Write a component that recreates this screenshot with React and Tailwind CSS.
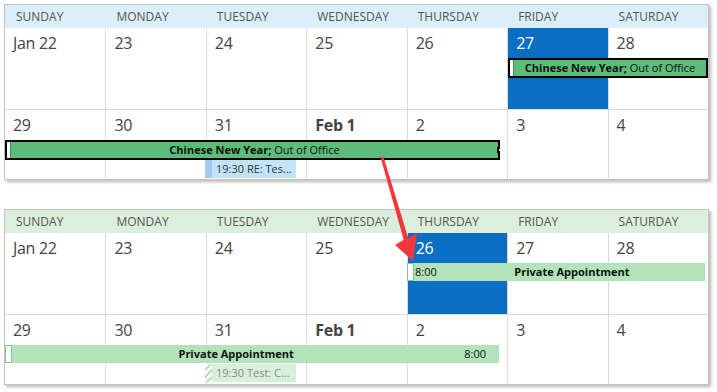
import React from "react";

const DAYS = ["SUNDAY", "MONDAY", "TUESDAY", "WEDNESDAY", "THURSDAY", "FRIDAY", "SATURDAY"];
const WEEK1 = ["Jan 22", "23", "24", "25", "26", "27", "28"];
const WEEK2 = ["29", "30", "31", "Feb 1", "2", "3", "4"];

const Cell = ({ label, idx, today, bold }) => (
  <div
    className={`h-full pl-[8px] pt-[5px] text-[16px] leading-[20px] tracking-[-0.3px] ${idx > 0 ? "border-l border-[#dadada]" : ""} ${
      today ? "bg-[#0a6fc2] text-white" : "text-[#444]"
    } ${bold ? "font-bold" : ""}`}
  >
    {label}
  </div>
);

const Week = ({ labels, today, className, children }) => (
  <div className={`relative grid grid-cols-7 ${className}`}>
    {labels.map((l, i) => (
      <Cell key={i} idx={i} label={l} today={today === i} bold={l === "Feb 1"} />
    ))}
    {children}
  </div>
);

const Calendar = ({ headBg, today, week1Events, week2Events, className }) => (
  <div className={`w-[705px] border border-[#c4c4c4] bg-white shadow-[2px_2px_3px_rgba(0,0,0,0.28)] ${className}`}>
    <div className={`grid grid-cols-7 h-[23px] items-center ${headBg}`}>
      {DAYS.map((d) => (
        <div key={d} className="pl-[11px] text-[12px] text-[#555] leading-none">
          {d}
        </div>
      ))}
    </div>
    <Week labels={WEEK1} today={today} className="h-[82px] border-b border-[#dadada]">
      {week1Events}
    </Week>
    <Week labels={WEEK2} className="h-[69px]">
      {week2Events}
    </Week>
  </div>
);

const OutOfOffice = ({ className, notchRight }) => (
  <div className={`absolute flex h-[20px] border-2 border-black bg-[#5bbd79] ${className}`}>
    <div className="w-[4px] h-full bg-white border-r border-[#3f8f58]"></div>
    <div className="flex-1 flex items-center justify-center text-[11px] text-[#111] whitespace-nowrap">
      <span className="font-bold">Chinese New Year;</span>&nbsp;Out of Office
    </div>
    {notchRight && <div className="absolute right-[-2px] top-[5px] w-[3px] h-[6px] bg-white border-y-2 border-l-2 border-black"></div>}
  </div>
);

const Private = ({ className, timeLeft }) => (
  <div className={`absolute flex items-center h-[18px] bg-[#b2e3b9] text-[11px] text-[#111] whitespace-nowrap ${className}`}>
    <div className="w-[7px] h-full bg-white border border-[#7fc98b]"></div>
    {timeLeft && <span className="pl-[1px] pr-[2px]">8:00</span>}
    <div className="flex-1 text-center font-bold">Private Appointment</div>
    {!timeLeft && <span className="pl-[4px] pr-[13px]">8:00</span>}
  </div>
);

export default function App() {
  return (
    <div className="relative w-[717px] h-[392px] bg-white pl-[4px] pt-[4px] font-['Open_Sans',sans-serif] overflow-hidden">
      <Calendar
        headBg="bg-[#dbeffa]"
        today={5}
        week1Events={<OutOfOffice className="left-[503px] top-[30px] w-[200px]" />}
        week2Events={
          <>
            <OutOfOffice className="left-0 top-[30px] w-[495px]" notchRight />
            <div className="absolute left-[200px] top-[50px] w-[91px] h-[18px] flex bg-[#c2e4f8] text-[11px] text-[#333] items-center">
              <div className="w-[7px] h-full bg-[#a3cbee]"></div>
              <span className="pl-[4px] whitespace-nowrap">19:30 RE: Tes...</span>
            </div>
          </>
        }
      />

      <Calendar
        className="mt-[29px]"
        headBg="bg-[#dcefdc]"
        today={4}
        week1Events={<Private className="left-[402px] top-[30px] w-[298px]" timeLeft />}
        week2Events={
          <>
            <Private className="left-0 top-[30px] w-[494px]" />
            <div className="absolute left-[200px] top-[49px] w-[91px] h-[18px] flex bg-[#d6f0da] text-[11px] text-[#8a8a8a] items-center">
              <div className="w-[7px] h-full bg-[repeating-linear-gradient(135deg,#ffffff_0px,#ffffff_3px,#b2e3b9_3px,#b2e3b9_5px)]"></div>
              <span className="pl-[4px] whitespace-nowrap">19:30 Test: C...</span>
            </div>
          </>
        }
      />

      <svg className="absolute left-0 top-0 pointer-events-none" width="717" height="392" viewBox="0 0 717 392">
        <polygon
          points="380.5,157.3 383.5,156.7 408.3,238.3 417,233 413,261 395,245 403.7,239.7"
          fill="#f2383d"
        />
      </svg>
    </div>
  );
}
